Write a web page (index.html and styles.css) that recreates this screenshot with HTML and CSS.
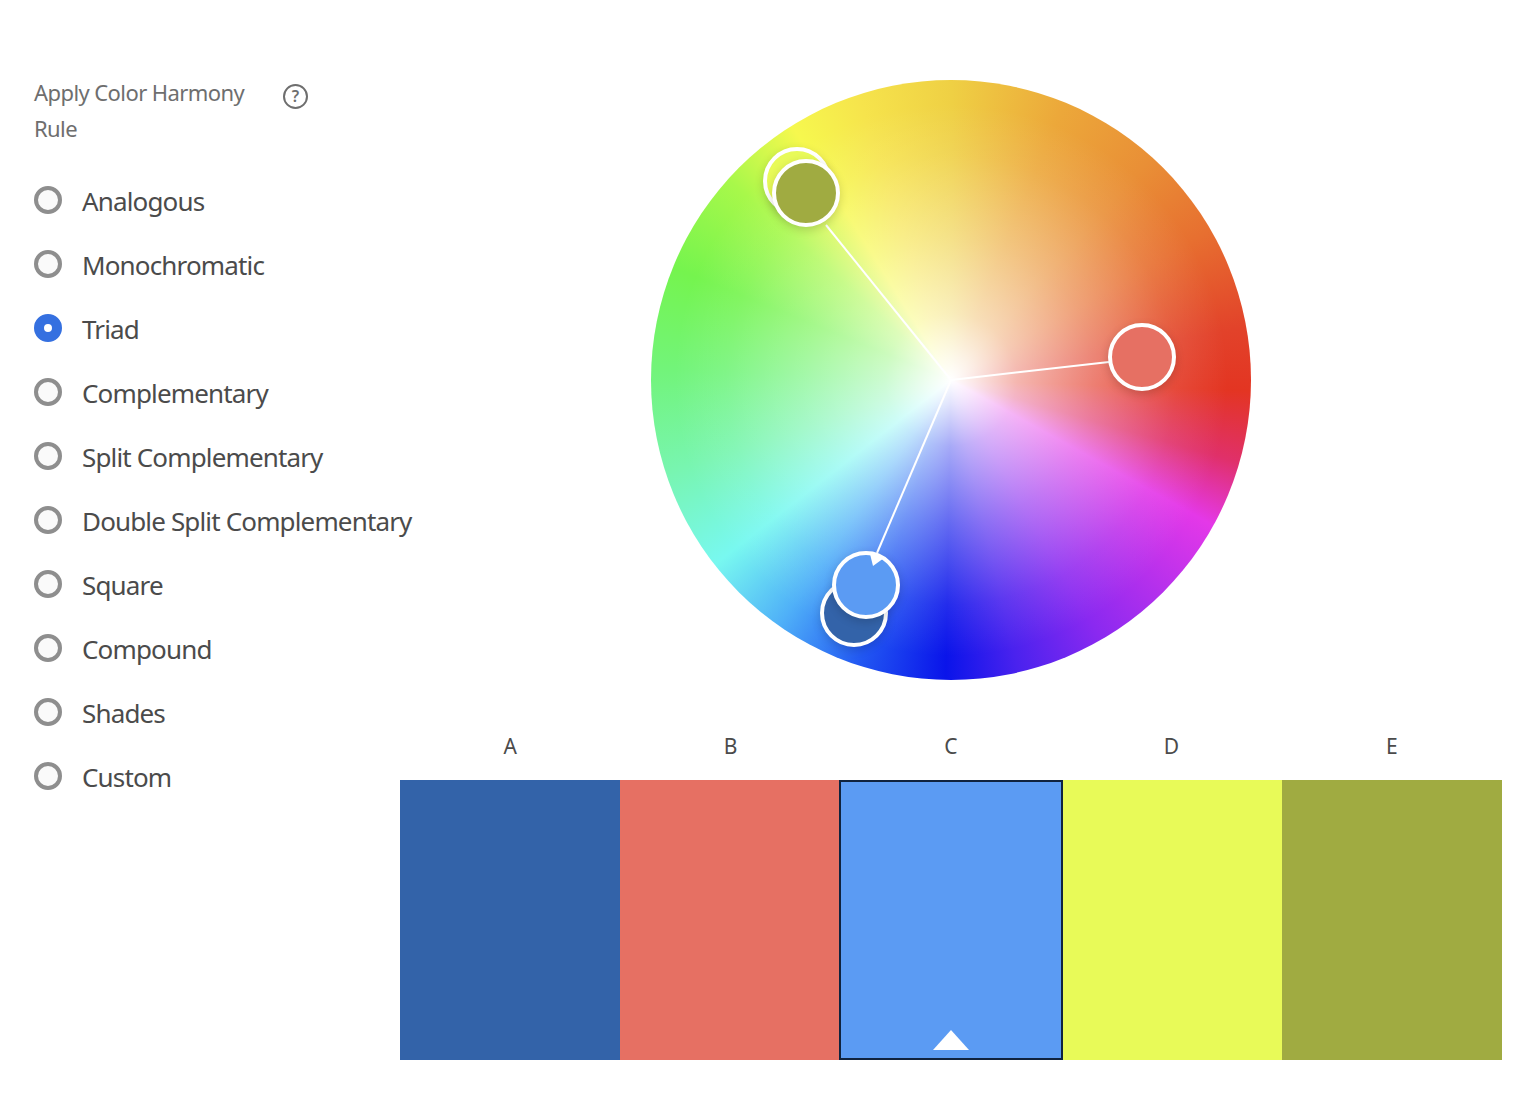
FILE: index.html
```html
<!DOCTYPE html>
<html lang="en">
<head>
  <meta charset="UTF-8">
  <title>Color Wheel</title>
  <link rel="stylesheet" href="styles.css">
</head>
<body>
  <div class="page">
    <div class="sidebar">
      <div class="rule-title">
        <span class="rule-text">Apply Color Harmony Rule</span>
        <span class="help-icon">?</span>
      </div>
      <ul class="rule-list">
        <li class="rule"><span class="radio"></span>Analogous</li>
        <li class="rule"><span class="radio"></span>Monochromatic</li>
        <li class="rule"><span class="radio checked"></span>Triad</li>
        <li class="rule"><span class="radio"></span>Complementary</li>
        <li class="rule"><span class="radio"></span>Split Complementary</li>
        <li class="rule"><span class="radio"></span>Double Split Complementary</li>
        <li class="rule"><span class="radio"></span>Square</li>
        <li class="rule"><span class="radio"></span>Compound</li>
        <li class="rule"><span class="radio"></span>Shades</li>
        <li class="rule"><span class="radio"></span>Custom</li>
      </ul>
    </div>

    <div class="main">
      <div class="wheel">
        <div class="wheel-white"></div>
        <svg class="wheel-lines" width="600" height="600" viewBox="0 0 600 600">
          <line x1="300" y1="300" x2="175" y2="145"/>
          <line x1="300" y1="300" x2="458" y2="282"/>
          <line x1="300" y1="300" x2="226" y2="473"/>
        </svg>
        <span class="handle handle-d"></span>
        <span class="handle handle-e"></span>
        <span class="handle handle-b"></span>
        <span class="handle handle-a"></span>
        <span class="handle handle-c"></span>
        <svg class="wheel-marker" width="600" height="600" viewBox="0 0 600 600">
          <polygon points="219,474 233,478 222,486"/>
        </svg>
      </div>

      <div class="labels">
        <span>A</span>
        <span>B</span>
        <span>C</span>
        <span>D</span>
        <span>E</span>
      </div>
      <div class="swatches">
        <div class="swatch swatch-a"></div>
        <div class="swatch swatch-b"></div>
        <div class="swatch swatch-c"><span class="base-arrow"></span></div>
        <div class="swatch swatch-d"></div>
        <div class="swatch swatch-e"></div>
      </div>
    </div>
  </div>
</body>
</html>
```

FILE: styles.css
```css
body {
  margin: 0;
  background: #fff;
  font-family: "Noto Sans", Arial, sans-serif;
  color: #4b4b4b;
}

.page {
  display: flex;
  height: 1096px;
  overflow: hidden;
}

/* left column */
.sidebar {
  width: 400px;
  flex: none;
  box-sizing: border-box;
  padding: 74px 0 0 34px;
}

.rule-title {
  display: flex;
  align-items: flex-start;
  gap: 28px;
  width: 274px;
}

.rule-text {
  width: 222px;
  font-size: 22px;
  line-height: 36px;
  color: #6e6e6e;
  letter-spacing: -0.58px;
}

.help-icon {
  flex: none;
  box-sizing: border-box;
  width: 25px;
  height: 25px;
  margin-top: 10px;
  border: 2px solid #6e6e6e;
  border-radius: 50%;
  font-size: 16px;
  font-weight: 600;
  line-height: 21px;
  text-align: center;
  color: #6e6e6e;
}

.rule-list {
  list-style: none;
  margin: 23px 0 0;
  padding: 0;
}

.rule {
  display: flex;
  align-items: center;
  gap: 20px;
  height: 64px;
  font-size: 26px;
  letter-spacing: -0.85px;
  white-space: nowrap;
}

.radio {
  flex: none;
  box-sizing: border-box;
  width: 28px;
  height: 28px;
  margin-top: -2px;
  border: 4px solid #8e8e8e;
  border-radius: 50%;
  background: #fafafa;
}

.radio.checked {
  border: 10px solid #3570e0;
  background: #fff;
}

/* right column */
.main {
  width: 1102px;
  flex: none;
  padding-top: 80px;
}

.wheel {
  position: relative;
  width: 600px;
  height: 600px;
  margin: 0 auto;
  border-radius: 50%;
  background: conic-gradient(
    #efd044 0deg,
    #eca83a 22deg,
    #e98f36 42deg,
    #e76f30 60deg,
    #e2422a 80deg,
    #e33522 92deg,
    #e0306a 106deg,
    #e438e8 119deg,
    #8a29f0 150deg,
    #4a22ee 167deg,
    #0a14ea 181deg,
    #2258f2 198deg,
    #4fb0f8 215deg,
    #78f8f0 232deg,
    #78f5b0 252deg,
    #72f47a 272deg,
    #75f44e 292deg,
    #a8f84a 312deg,
    #f6f84e 328deg,
    #f6e44c 342deg,
    #efd044 360deg
  );
}

.wheel-white {
  position: absolute;
  inset: 0;
  border-radius: 50%;
  background: radial-gradient(circle closest-side, #fff 0, rgba(255, 255, 255, 0.88) 8%, rgba(255, 255, 255, 0.64) 22%, rgba(255, 255, 255, 0.36) 48%, rgba(255, 255, 255, 0.1) 75%, rgba(255, 255, 255, 0) 92%);
}

.wheel-lines,
.wheel-marker {
  position: absolute;
  left: 0;
  top: 0;
}

.wheel-lines line {
  stroke: #fff;
  stroke-width: 2;
}

.wheel-marker polygon {
  fill: #fff;
}

.handle {
  position: absolute;
  box-sizing: border-box;
  width: 68px;
  height: 68px;
  border: 4px solid #fff;
  border-radius: 50%;
  box-shadow: 0 3px 10px rgba(0, 0, 0, 0.16);
}

.handle-a { left: 169px; top: 499px; background: #3363a9; }
.handle-b { left: 457px; top: 243px; background: #e67063; }
.handle-c { left: 181px; top: 471px; background: #5b9bf3; }
.handle-d { left: 112px; top: 67px; background: #e8fa58; }
.handle-e { left: 121px; top: 79px; background: #a0ab41; }

.labels {
  display: grid;
  grid-template-columns: repeat(5, 1fr);
  margin-top: 50px;
  font-size: 21px;
  line-height: 32px;
  text-align: center;
}

.swatches {
  display: grid;
  grid-template-columns: 220px 219px 224px 219px 220px;
  height: 280px;
  margin-top: 18px;
}

.swatch-a { background: #3363a9; }
.swatch-b { background: #e67063; }
.swatch-d { background: #e8fa58; }
.swatch-e { background: #a0ab41; }

.swatch-c {
  position: relative;
  box-sizing: border-box;
  border: 2px solid #10233f;
  background: #5b9bf3;
}

.base-arrow {
  position: absolute;
  left: 92px;
  bottom: 8px;
  border-left: 18px solid transparent;
  border-right: 18px solid transparent;
  border-bottom: 20px solid #fff;
}
```
